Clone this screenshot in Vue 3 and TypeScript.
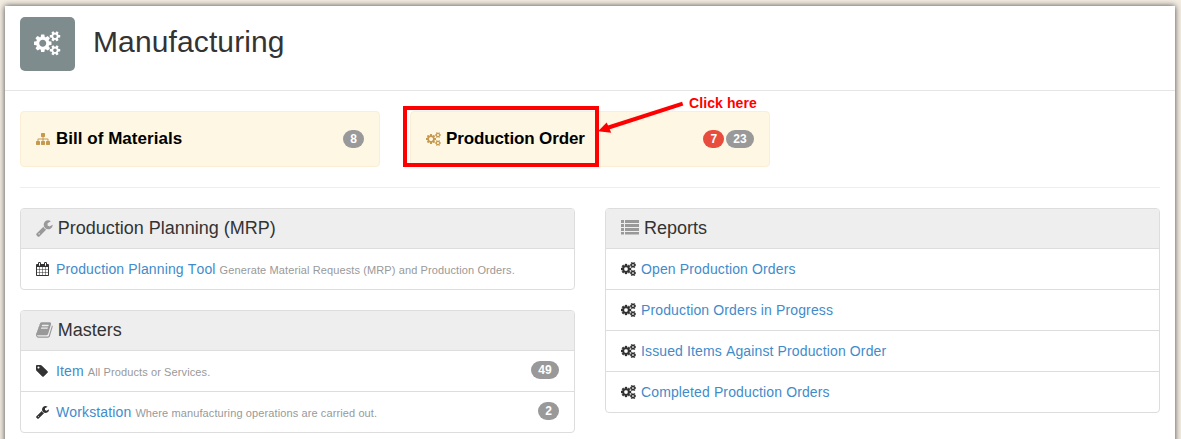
<script setup lang="ts">
interface Entry { icon: string; label: string; note?: string; count?: number }
interface Panel { icon: string; title: string; entries: Entry[] }

const icons: Record<string, { box: string; ratio: string; d: string }> = {
  cogs: {
    box: '-64 0 1920 1792', ratio: 'wide',
    d: 'M832 896q0-106-75-181t-181-75-181 75-75 181 75 181 181 75 181-75 75-181zm768 512q0-52-38-90t-90-38-90 38-38 90q0 53 37.5 90.5t90.5 37.5 90.5-37.5 37.5-90.5zm0-1024q0-52-38-90t-90-38-90 38-38 90q0 53 37.5 90.5t90.5 37.5 90.5-37.5 37.5-90.5zm-384 421v185q0 10-7 19.5t-16 10.5l-155 24q-11 35-32 76 34 48 90 115 7 11 7 20 0 12-7 19-23 30-82.5 89.5t-78.5 59.5q-11 0-21-7l-115-90q-37 19-77 31-11 108-23 155-7 24-30 24h-186q-11 0-20-7.5t-10-17.5l-23-153q-34-10-75-31l-118 89q-7 7-20 7-11 0-21-8-144-133-144-160 0-9 7-19 10-14 41-53t47-61q-23-44-35-82l-152-24q-10-1-17-9.5t-7-19.5v-185q0-10 7-19.5t16-10.5l155-24q11-35 32-76-34-48-90-115-7-11-7-20 0-12 7-20 22-30 82-89t79-59q11 0 21 7l115 90q34-18 77-32 11-108 23-154 7-24 30-24h186q11 0 20 7.5t10 17.5l23 153q34 10 75 31l118-89q8-7 20-7 11 0 21 8 144 133 144 160 0 8-7 19-12 16-42 54t-45 60q23 48 34 82l152 23q10 2 17 10.5t7 19.5zm640 533v140q0 16-149 31-12 27-30 52 51 113 51 138 0 4-4 7-122 71-124 71-8 0-46-47t-52-68q-20 2-30 2t-30-2q-14 21-52 68t-46 47q-2 0-124-71-4-3-4-7 0-25 51-138-18-25-30-52-149-15-149-31v-140q0-16 149-31 13-29 30-52-51-113-51-138 0-4 4-7 4-2 35-20t59-34 30-16q8 0 46 46.5t52 67.5q20-2 30-2t30 2q51-71 92-112l6-2q4 0 124 70 4 3 4 7 0 25-51 138 17 23 30 52 149 15 149 31zm0-1024v140q0 16-149 31-12 27-30 52 51 113 51 138 0 4-4 7-122 71-124 71-8 0-46-47t-52-68q-20 2-30 2t-30-2q-14 21-52 68t-46 47q-2 0-124-71-4-3-4-7 0-25 51-138-18-25-30-52-149-15-149-31v-140q0-16 149-31 13-29 30-52-51-113-51-138 0-4 4-7 4-2 35-20t59-34 30-16q8 0 46 46.5t52 67.5q20-2 30-2t30 2q51-71 92-112l6-2q4 0 124 70 4 3 4 7 0 25-51 138 17 23 30 52 149 15 149 31z',
  },
  wrench: {
    box: '64 0 1664 1792', ratio: 'mid',
    d: 'M448 1472q0-26-19-45t-45-19-45 19-19 45 19 45 45 19 45-19 19-45zm644-420l-682 682q-37 37-90 37-52 0-91-37l-106-108q-38-36-38-90 0-53 38-91l681-681q39 98 114.5 173.5t173.5 114.5zm634-435q0 39-23 106-47 134-164.5 217.5t-258.5 83.5q-185 0-316.5-131.5t-131.5-316.5 131.5-316.5 316.5-131.5q58 0 121.5 16.5t107.5 46.5q16 11 16 28t-16 28l-293 169v224l193 107q5-3 79-48.5t135.5-81 70.5-35.5q15 0 23.5 10t8.5 25z',
  },
  tag: {
    box: '128 0 1536 1792', ratio: 'narrow',
    d: 'M576 448q0-53-37.5-90.5t-90.5-37.5-90.5 37.5-37.5 90.5 37.5 90.5 90.5 37.5 90.5-37.5 37.5-90.5zm1067 576q0 53-37 90l-491 492q-39 37-91 37-53 0-90-37l-715-716q-38-37-64.5-101t-26.5-117v-416q0-52 38-90t90-38h416q53 0 117 26.5t102 64.5l715 714q37 39 37 91z',
  },
  calendar: {
    box: '64 0 1664 1792', ratio: 'mid',
    d: 'M192 1664h288v-288h-288v288zm352 0h320v-288h-320v288zm-352-352h288v-320h-288v320zm352 0h320v-320h-320v320zm-352-384h288v-288h-288v288zm736 736h320v-288h-320v288zm-384-736h320v-288h-320v288zm768 736h288v-288h-288v288zm-384-352h320v-320h-320v320zm-352-864v-288q0-13-9.5-22.5t-22.5-9.5h-64q-13 0-22.5 9.5t-9.5 22.5v288q0 13 9.5 22.5t22.5 9.5h64q13 0 22.5-9.5t9.5-22.5zm736 864h288v-320h-288v320zm-384-384h320v-288h-320v288zm384 0h288v-288h-288v288zm32-480v-288q0-13-9.5-22.5t-22.5-9.5h-64q-13 0-22.5 9.5t-9.5 22.5v288q0 13 9.5 22.5t22.5 9.5h64q13 0 22.5-9.5t9.5-22.5zm384-64v1280q0 52-38 90t-90 38h-1408q-52 0-90-38t-38-90v-1280q0-52 38-90t90-38h128v-96q0-66 47-113t113-47h64q66 0 113 47t47 113v96h384v-96q0-66 47-113t113-47h64q66 0 113 47t47 113v96h128q52 0 90 38t38 90z',
  },
  sitemap: {
    box: '0 0 1792 1792', ratio: 'full',
    d: 'M1792 1248v320q0 40-28 68t-68 28h-320q-40 0-68-28t-28-68v-320q0-40 28-68t68-28h96v-192h-512v192h96q40 0 68 28t28 68v320q0 40-28 68t-68 28h-320q-40 0-68-28t-28-68v-320q0-40 28-68t68-28h96v-192h-512v192h96q40 0 68 28t28 68v320q0 40-28 68t-68 28h-320q-40 0-68-28t-28-68v-320q0-40 28-68t68-28h96v-192q0-52 38-90t90-38h512v-192h-96q-40 0-68-28t-28-68v-320q0-40 28-68t68-28h320q40 0 68 28t28 68v320q0 40-28 68t-68 28h-96v192h512q52 0 90 38t38 90v192h96q40 0 68 28t28 68z',
  },
  book: {
    box: '64 0 1664 1792', ratio: 'mid',
    d: 'M1703 478q40 57 18 129l-275 906q-19 64-76.5 107.5t-122.5 43.5h-923q-77 0-148.5-53.5t-99.5-131.5q-24-67-2-127 0-4 3-27t4-37q1-8-3-21.5t-3-19.5q2-11 8-21t16.5-23.5 16.5-23.5q23-38 45-91.5t30-91.5q3-10 .5-30t-.5-28q3-11 17-28t17-23q21-36 42-92t25-90q1-9-2.5-32t.5-28q4-13 22-30.5t22-22.5q19-26 42.5-84.5t27.5-96.5q1-8-3-25.5t-2-26.5q2-8 9-18t18-23 17-21q8-12 16.5-30.5t15-35 16-36 19.5-32 26.5-23.5 36-11.5 47.5 5.5l-1 3q38-9 51-9h761q74 0 114 56t18 130l-274 906q-36 119-71.5 153.5t-128.5 34.5h-869q-27 0-38 15-11 16-1 43 24 70 144 70h923q29 0 56-15.5t35-41.5l300-987q7-22 5-57 38 15 59 43zm-1064 2q-4 13 2 22.5t20 9.5h608q13 0 25.5-9.5t16.5-22.5l21-64q4-13-2-22.5t-20-9.5h-608q-13 0-25.5 9.5t-16.5 22.5zm-83 256q-4 13 2 22.5t20 9.5h608q13 0 25.5-9.5t16.5-22.5l21-64q4-13-2-22.5t-20-9.5h-608q-13 0-25.5 9.5t-16.5 22.5z',
  },
  list: {
    box: '0 0 18 18', ratio: 'full',
    d: 'M0 1h3v3H0zM4 1h14v3H4zM0 5h3v3H0zM4 5h14v3H4zM0 9h3v3H0zM4 9h14v3H4zM0 13h3v2.5H0zM4 13h14v2.5H4z',
  },
}

const columns: Panel[][] = [
  [
    {
      icon: 'wrench', title: 'Production Planning (MRP)',
      entries: [{ icon: 'calendar', label: 'Production Planning Tool', note: 'Generate Material Requests (MRP) and Production Orders.' }],
    },
    {
      icon: 'book', title: 'Masters',
      entries: [
        { icon: 'tag', label: 'Item', note: 'All Products or Services.', count: 49 },
        { icon: 'wrench', label: 'Workstation', note: 'Where manufacturing operations are carried out.', count: 2 },
      ],
    },
  ],
  [
    {
      icon: 'list', title: 'Reports',
      entries: [
        { icon: 'cogs', label: 'Open Production Orders' },
        { icon: 'cogs', label: 'Production Orders in Progress' },
        { icon: 'cogs', label: 'Issued Items Against Production Order' },
        { icon: 'cogs', label: 'Completed Production Orders' },
      ],
    },
  ],
]
</script>

<template>
  <div class="page">
    <header class="title-bar">
      <span class="app-icon">
        <svg class="icon wide" :viewBox="icons.cogs.box"><path :d="icons.cogs.d" /></svg>
      </span>
      <h1>Manufacturing</h1>
    </header>
    <main>
      <div class="shortcuts">
        <a class="shortcut">
          <span class="slot"><svg class="icon full" :viewBox="icons.sitemap.box"><path :d="icons.sitemap.d" /></svg></span>
          <strong>Bill of Materials</strong>
          <span class="badge">8</span>
        </a>
        <a class="shortcut order">
          <span class="slot"><svg class="icon wide" :viewBox="icons.cogs.box"><path :d="icons.cogs.d" /></svg></span>
          <strong>Production Order</strong>
          <span class="badge alert">7</span>
          <span class="badge">23</span>
          <span class="highlight"></span>
          <svg class="arrow" viewBox="0 0 90 36">
            <path class="shaft" d="M85.7 4.7L10 29" />
            <path class="head" d="M1 32.2L9.7 23.6L14.2 33.8Z" />
          </svg>
          <span class="hint">Click here</span>
        </a>
      </div>
      <div class="columns">
        <div v-for="(panels, c) in columns" :key="c" class="column">
          <section v-for="panel in panels" :key="panel.title" class="panel">
            <h2>
              <svg class="icon" :class="icons[panel.icon].ratio" :viewBox="icons[panel.icon].box"><path :d="icons[panel.icon].d" /></svg>
              <span>{{ panel.title }}</span>
            </h2>
            <div v-for="entry in panel.entries" :key="entry.label" class="entry">
              <span class="slot"><svg class="icon" :class="[icons[entry.icon].ratio, entry.icon]" :viewBox="icons[entry.icon].box"><path :d="icons[entry.icon].d" /></svg></span>
              <span class="text"><a>{{ entry.label }}</a>{{ ' ' }}<small v-if="entry.note">{{ entry.note }}</small></span>
              <span v-if="entry.count" class="badge">{{ entry.count }}</span>
            </div>
          </section>
        </div>
      </div>
    </main>
  </div>
</template>

<style>
html, body { height: 100%; overflow: hidden; background: #f2ece2; }
#app { height: 100%; }
</style>

<style scoped>
* { box-sizing: border-box; }
.page {
  height: 460px;
  margin: 0 6px 0 5px;
  border-top: 6px solid transparent;
  background: #fff;
  background-clip: padding-box;
  font: 14px/20px "Liberation Sans", Arial, sans-serif;
  color: #333;
  position: relative;
}
.page::before {
  content: "";
  position: absolute;
  inset: 0;
  box-shadow: 0 0 6px rgba(0, 0, 0, .7);
  pointer-events: none;
}
.icon { height: 1em; fill: currentColor; display: block; flex: none; }
.wide { width: 1.0714em; }
.full { width: 1em; }
.mid { width: .9286em; }
.narrow { width: .8571em; }
.slot { width: 20px; flex: none; }
.title-bar { height: 85px; padding: 11px 15px 0; display: flex; border-bottom: 1px solid #e5e5e5; }
.app-icon {
  width: 55px; height: 54px; padding-bottom: 1px; border-radius: 5px; background: #7f8c8d; color: #fff;
  display: flex; align-items: center; justify-content: center; font-size: 24.5px;
}
h1 { margin: 8px 0 0 18px; font-size: 30px; line-height: 34px; font-weight: 400; letter-spacing: .12px; }
main { padding: 20px 15px 0; }
.shortcuts { display: flex; gap: 30px; padding-bottom: 20px; border-bottom: 1px solid #eee; }
.shortcut {
  width: 360px; height: 56px; padding: 0 15px; display: flex; align-items: center; position: relative;
  border: 1px solid #fbeed5; border-radius: 4px; background: #fdf7e3; color: #c7984f;
}
.shortcut strong { flex: 1; font-size: 17px; color: #000; line-height: 20px; letter-spacing: .03px; }
.order strong { letter-spacing: -.12px; }
.badge {
  flex: none; min-width: 10px; padding: 3px 7px; border-radius: 10px; background: #999; color: #fff;
  font-size: 12px; line-height: 12px; font-weight: 700; text-align: center; letter-spacing: .2px;
}
.badge + .badge { margin-left: 2px; }
.badge.alert { background: #e74c3c; }
.highlight { position: absolute; left: -8px; top: -6px; width: 196px; height: 61px; border: 4px solid #f00; }
.arrow { position: absolute; left: 186px; top: -13px; width: 90px; height: 36px; }
.shaft { stroke: #f00; stroke-width: 4; fill: none; }
.head { fill: #f00; }
.hint { position: absolute; left: 278px; top: -19px; color: #f00; font-weight: 700; line-height: 20px; white-space: nowrap; letter-spacing: .1px; }
.columns { display: grid; grid-template-columns: 555px 555px; gap: 30px; padding-top: 20px; align-items: start; }
.column { display: grid; gap: 20px; }
.panel { border: 1px solid #ddd; border-radius: 4px; overflow: hidden; }
h2 { margin: 0; height: 39px; padding: 0 15px 2px; display: flex; align-items: center; gap: 5px; background: #eee; font-size: 18px; font-weight: 400; line-height: 20px; }
h2 .icon { color: #999; }
.entry { height: 41px; padding: 0 15px; display: flex; align-items: center; border-top: 1px solid #ddd; }
.entry .badge { margin-bottom: 2px; }
.entry .cogs { stroke: currentColor; stroke-width: 45; }
.text { flex: 1; font-kerning: none; letter-spacing: .13px; }
.text a { color: #428bca; }
.text small { font-size: 11px; color: #999; letter-spacing: .11px; }
</style>
